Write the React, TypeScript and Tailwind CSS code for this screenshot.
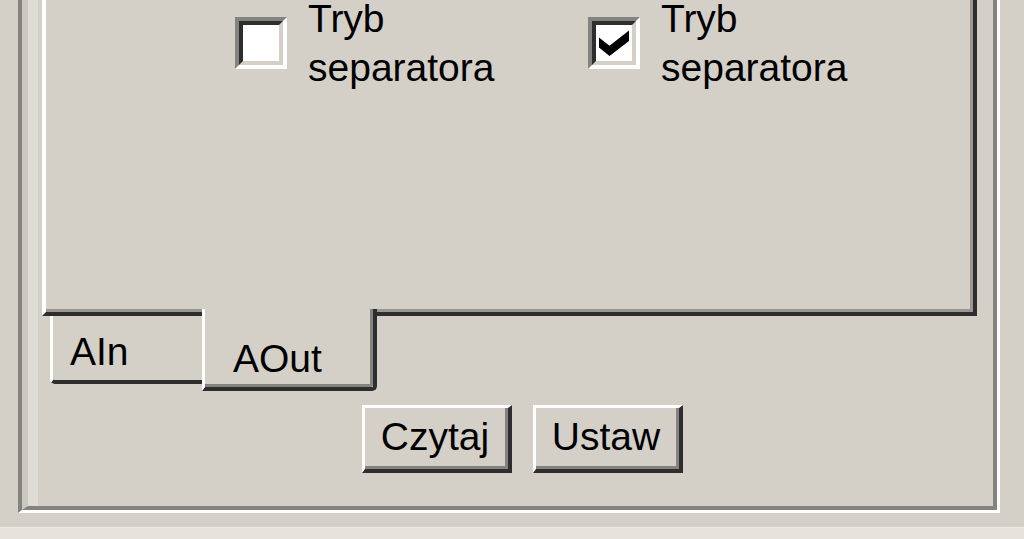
import React from "react";

function CheckBox({ checked }: { checked?: boolean }) {
  return (
    <span className="block h-[52px] w-[52px] shrink-0 border-4 border-t-[#85837f] border-l-[#85837f] border-b-white border-r-white">
      <span className="block h-full w-full border-4 border-t-[#2e2e2e] border-l-[#2e2e2e] border-b-[#d4d0c8] border-r-[#d4d0c8] bg-white">
        {checked && (
          <svg width="36" height="36" viewBox="0 0 36 36" className="block">
            <polygon points="3,12.4 13.5,20.8 33,5.6 33,16 13.5,31 3,22.6" fill="#000" />
          </svg>
        )}
      </span>
    </span>
  );
}

function Option({ checked }: { checked?: boolean }) {
  return (
    <label className="flex w-[353px] items-center gap-[21px]">
      <CheckBox checked={checked} />
      <span className="block leading-[49px]">
        Tryb
        <br />
        separatora
      </span>
    </label>
  );
}

function Button({ children }: { children: React.ReactNode }) {
  return (
    <button className="h-[68px] w-[150px] border-l-[3px] border-t-[3px] border-b-4 border-r-4 border-l-white border-t-white border-b-[#2e2e2e] border-r-[#2e2e2e] bg-[#d4d0c8] p-0">
      <span className="flex h-full w-full items-center justify-center border-b-[3px] border-r-[3px] border-b-[#85837f] border-r-[#85837f] leading-[44px]">
        {children}
      </span>
    </button>
  );
}

export default function App() {
  return (
    <div className="flex h-[539px] w-[1024px] flex-col overflow-hidden bg-[#d4d0c8] font-['Liberation_Sans',Arial,sans-serif] text-[39px] text-black">
      {/* ramka grupy (góra poza ekranem) */}
      <div className="ml-[18px] mr-[24px] flex h-[513px] shrink-0 border-l-4 border-r-[3px] border-b-[3px] border-l-[#85837f] border-r-white border-b-white">
        <div className="flex flex-1 border-l-[6px] border-r-4 border-b-4 border-l-[#cbc8c2] border-r-[#85837f] border-b-[#85837f]">
          <div className="flex flex-1 flex-col border-l-[10px] border-l-[#dfdcd6] pl-[4px] pr-[16px]">
            {/* panel zakładek */}
            <div className="h-[316px] shrink-0 border-l-4 border-r-4 border-b-4 border-l-white border-r-[#2e2e2e] border-b-[#2e2e2e]">
              <div className="flex h-full flex-col border-r-[3px] border-b-[3px] border-r-[#9a9792] border-b-[#9a9792]">
                <div className="-mt-[6px] flex pl-[189px]">
                  <Option />
                  <Option checked />
                </div>
              </div>
            </div>

            {/* zakładki na dole */}
            <div className="relative z-10 -mt-[7px] flex items-start pl-[8px]">
              <div className="mt-[7px] h-[68px] w-[152px] rounded-bl-[5px] border-l-[3px] border-b-4 border-l-white border-b-[#2e2e2e] pl-[17px] pt-[14px] leading-[44px]">
                AIn
              </div>
              <div className="h-[82px] w-[175px] rounded-br-[5px] border-l-[3px] border-r-4 border-b-4 border-l-white border-r-[#2e2e2e] border-b-[#2e2e2e] bg-[#d4d0c8]">
                <div className="h-full rounded-br-[3px] border-r-[3px] border-b-[3px] border-r-[#85837f] border-b-[#85837f] pl-[28px] pt-[28px] leading-[44px]">
                  AOut
                </div>
              </div>
            </div>

            {/* przyciski */}
            <div className="mt-[14px] flex gap-[21px] pl-[320px]">
              <Button>Czytaj</Button>
              <Button>Ustaw</Button>
            </div>
          </div>
        </div>
      </div>
      <div className="h-[14px] shrink-0" />
      <div className="flex-1 border-t border-t-[#ece9e4] bg-[#e6e3dd]" />
    </div>
  );
}
